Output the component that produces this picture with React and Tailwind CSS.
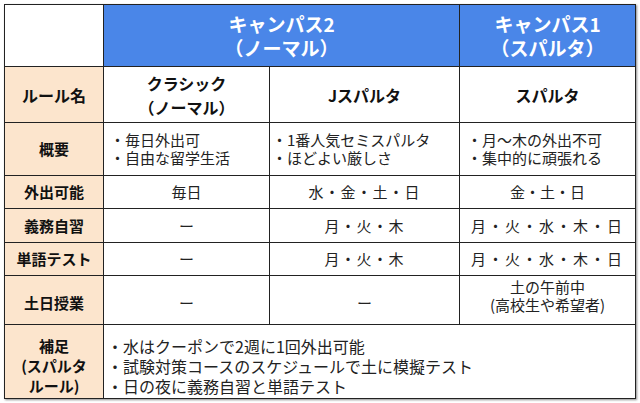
import React from "react";

const F = { fontFamily: '"Noto Sans CJK JP", "Noto Sans", sans-serif' };

function Label({ children, className = "" }) {
  return (
    <div className={`bg-[#fce5cd] flex flex-col items-center justify-center text-[15px] font-bold text-[#111] leading-[20px] ${className}`}>
      {children}
    </div>
  );
}

function Cell({ children, className = "" }) {
  return (
    <div className={`bg-white flex flex-col items-center justify-center text-[15px] text-[#222] leading-[18px] ${className}`}>
      {children}
    </div>
  );
}

function Bullets({ items, className = "" }) {
  return (
    <div className={`bg-white flex flex-col justify-center text-[15px] text-[#222] leading-[18px] ${className}`}>
      {items.map((t) => (
        <div key={t} className="whitespace-nowrap">・{t}</div>
      ))}
    </div>
  );
}

export default function App() {
  return (
    <div className="w-[640px] h-[403px] bg-white pt-[4px] pl-[4px]" style={F}>
      <div className="grid grid-cols-[98px_165px_189px_175px] grid-rows-[61px_55px_52px_32px_33px_32px_48px_73px] gap-px bg-[#222] p-px w-[632px] shadow-[1px_1px_2px_rgba(0,0,0,0.45)]">
        {/* header */}
        <div className="bg-white" />
        <div className="col-span-2 bg-[#4a86e8] flex flex-col items-center justify-center text-white font-bold text-[19px] leading-[24px]">
          <div>キャンパス2</div>
          <div>（ノーマル）</div>
        </div>
        <div className="bg-[#4a86e8] flex flex-col items-center justify-center text-white font-bold text-[19px] leading-[24px]">
          <div>キャンパス1</div>
          <div>（スパルタ）</div>
        </div>

        {/* ルール名 */}
        <Label className="text-[16px]">ルール名</Label>
        <div className="bg-white flex flex-col items-center justify-center font-bold text-[16px] leading-[24px] text-[#111]">
          <div>クラシック</div>
          <div>（ノーマル）</div>
        </div>
        <div className="bg-white flex items-center justify-center font-bold text-[16px] text-[#111]">Jスパルタ</div>
        <div className="bg-white flex items-center justify-center font-bold text-[16px] text-[#111]">スパルタ</div>

        {/* 概要 */}
        <Label>概要</Label>
        <Bullets className="pl-[6px]" items={["毎日外出可", "自由な留学生活"]} />
        <Bullets className="pl-[2px]" items={["1番人気セミスパルタ", "ほどよい厳しさ"]} />
        <Bullets className="pl-[7px]" items={["月～木の外出不可", "集中的に頑張れる"]} />

        {/* 外出可能 */}
        <Label>外出可能</Label>
        <Cell>毎日</Cell>
        <Cell className="tracking-[1px]">水・金・土・日</Cell>
        <Cell>金・土・日</Cell>

        {/* 義務自習 */}
        <Label>義務自習</Label>
        <Cell>ー</Cell>
        <Cell className="tracking-[1px]">月・火・木</Cell>
        <Cell className="tracking-[2px]">月・火・水・木・日</Cell>

        {/* 単語テスト */}
        <Label>単語テスト</Label>
        <Cell>ー</Cell>
        <Cell className="tracking-[1px]">月・火・木</Cell>
        <Cell className="tracking-[2px]">月・火・水・木・日</Cell>

        {/* 土日授業 */}
        <Label className="pt-[6px]">土日授業</Label>
        <Cell className="pt-[6px]">ー</Cell>
        <Cell className="pt-[6px]">ー</Cell>
        <Cell className="pb-[9px]">
          <div>土の午前中</div>
          <div>(高校生や希望者)</div>
        </Cell>

        {/* 補足 */}
        <Label className="pt-[8px]">
          <div>補足</div>
          <div>(スパルタ</div>
          <div>ルール)</div>
        </Label>
        <div className="col-span-3 bg-white flex flex-col justify-center pt-[8px] pl-[3px] text-[16px] text-[#222] leading-[20px]">
          <div>・水はクーポンで2週に1回外出可能</div>
          <div>・試験対策コースのスケジュールで土に模擬テスト</div>
          <div>・日の夜に義務自習と単語テスト</div>
        </div>
      </div>
    </div>
  );
}
